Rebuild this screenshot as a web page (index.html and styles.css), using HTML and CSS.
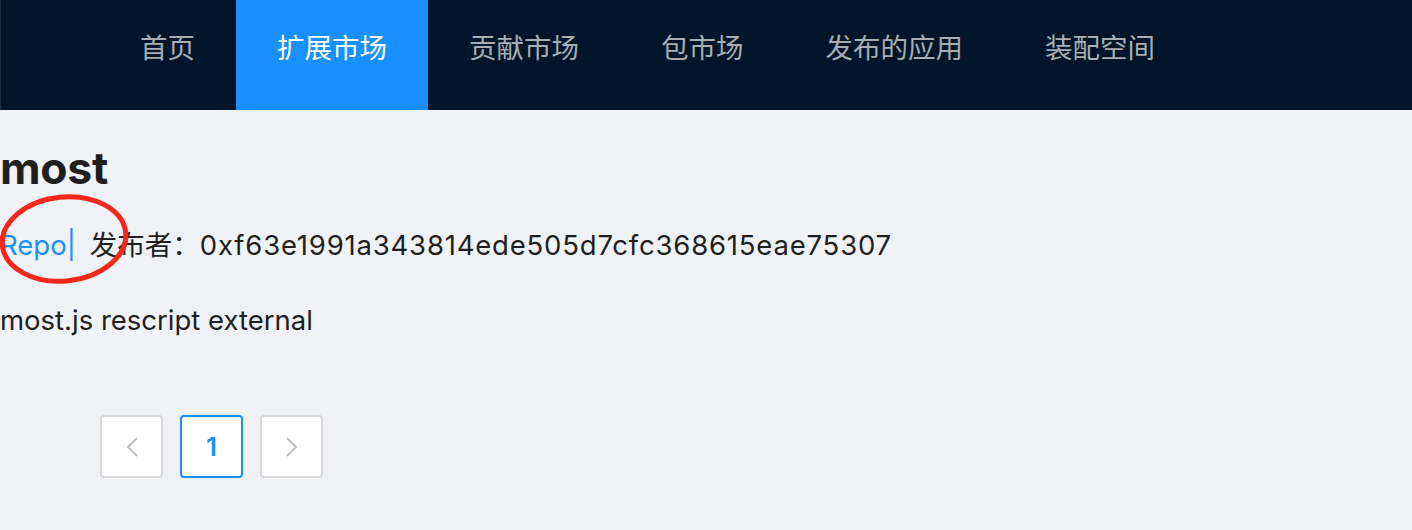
FILE: index.html
```html
<!DOCTYPE html>
<html lang="zh-CN">
<head>
<meta charset="utf-8">
<title>most</title>
<link rel="stylesheet" href="styles.css">
</head>
<body>
<header class="header">
  <nav class="menu">
    <a class="menu-item">首页</a>
    <a class="menu-item active">扩展市场</a>
    <a class="menu-item">贡献市场</a>
    <a class="menu-item">包市场</a>
    <a class="menu-item">发布的应用</a>
    <a class="menu-item">装配空间</a>
  </nav>
</header>
<main class="content">
  <h1 class="title">most</h1>
  <div class="meta">
    <a class="repo">Repo|</a><span class="publisher">发布者：<span class="hash">0xf63e1991a343814ede505d7cfc368615eae75307</span></span>
    <svg class="annotation" width="150" height="100" viewBox="0 0 150 100" aria-hidden="true">
      <ellipse cx="64" cy="50" rx="62" ry="42" transform="rotate(-6 64 50)" fill="none" stroke="#f5271d" stroke-width="5"/>
    </svg>
  </div>
  <p class="desc">most.js rescript external</p>
  <ul class="pagination">
    <li class="page-btn">
      <svg width="14" height="22" viewBox="0 0 14 22"><path d="M12 2 L3 11 L12 20" fill="none" stroke="#bfbfbf" stroke-width="2"/></svg>
    </li>
    <li class="page-btn current">1</li>
    <li class="page-btn">
      <svg width="14" height="22" viewBox="0 0 14 22"><path d="M2 2 L11 11 L2 20" fill="none" stroke="#bfbfbf" stroke-width="2"/></svg>
    </li>
  </ul>
</main>
</body>
</html>
```

FILE: styles.css
```css
html, body {
  margin: 0;
  padding: 0;
}
body {
  background: #f0f2f5;
  font-family: Inter, "Noto Sans CJK SC", sans-serif;
  color: #1f1f1f;
  height: 530px;
  overflow: hidden;
}
.header {
  height: 110px;
  background: #001529;
  border-left: 1px solid #1d2d3d;
}
.menu {
  display: flex;
  height: 110px;
  padding-left: 98px;
}
.menu-item {
  display: block;
  padding: 0 41px;
  height: 110px;
  line-height: 93px;
  font-size: 27.5px;
  color: #a6adb4;
  font-family: "Noto Sans CJK SC", sans-serif;
}
.menu-item.active {
  background: #1890ff;
  color: #ffffff;
}
.content {
  padding: 0;
}
.title {
  margin: 32px 0 0 0;
  font-size: 44.5px;
  line-height: 53px;
  font-weight: 700;
  color: #1f1f1f;
  letter-spacing: -0.3px;
}
.meta {
  position: relative;
  margin-top: 30px;
  font-size: 27.5px;
  line-height: 40px;
  display: flex;
}
.repo {
  color: #1890ff;
  margin-right: 14px;
}
.publisher {
  color: #1f1f1f;
}
.hash {
  letter-spacing: 0.8px;
}
.annotation {
  position: absolute;
  left: 0;
  top: -36px;
}
.desc {
  margin: 35px 0 0 0;
  font-size: 27.5px;
  line-height: 40px;
  color: #1f1f1f;
}
.pagination {
  list-style: none;
  margin: 75px 0 0 0;
  padding: 0 0 0 100px;
  display: flex;
  gap: 17px;
}
.page-btn {
  box-sizing: border-box;
  width: 63px;
  height: 63px;
  border: 2px solid #d9d9d9;
  border-radius: 4px;
  background: #ffffff;
  display: flex;
  align-items: center;
  justify-content: center;
  font-size: 26px;
  font-weight: 600;
  color: #1890ff;
}
.page-btn.current {
  border-color: #1890ff;
}
```
